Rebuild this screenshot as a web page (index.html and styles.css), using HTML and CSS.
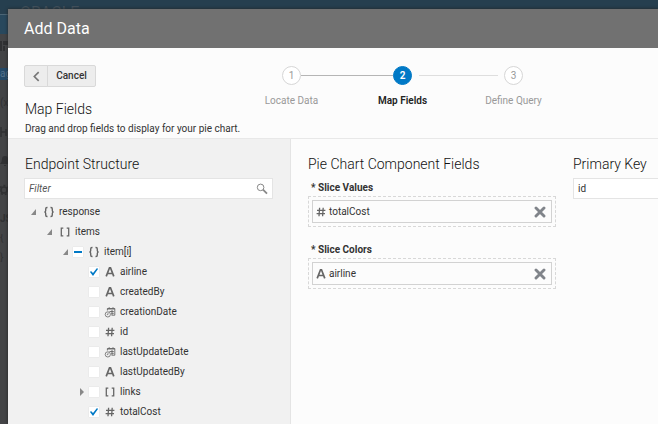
FILE: index.html
```html
<!DOCTYPE html>
<html lang="en">
<head>
<meta charset="utf-8">
<title>Add Data</title>
<link rel="stylesheet" href="styles.css">
</head>
<body>
<svg class="sprite" aria-hidden="true">
  <symbol id="object" viewBox="0 0 12 12"><path d="M4.5 1.5H4Q2.7 1.5 2.7 3V4.5Q2.7 6 1.4 6Q2.7 6 2.7 7.5V9Q2.7 10.5 4 10.5H4.5M7.5 1.5H8Q9.3 1.5 9.3 3V4.5Q9.3 6 10.6 6Q9.3 6 9.3 7.5V9Q9.3 10.5 8 10.5H7.5" fill="none" stroke="currentColor" stroke-width="1.4"/></symbol>
  <symbol id="array" viewBox="0 0 12 12"><path d="M4.3 2.2H2.3V9.8H4.3M7.7 2.2H9.7V9.8H7.7" fill="none" stroke="currentColor" stroke-width="1.3"/></symbol>
  <symbol id="string" viewBox="0 0 12 12"><path d="M2.2 10.4L5.5 1.8H6.5L9.8 10.4M3.5 7.5H8.5" fill="none" stroke="currentColor" stroke-width="1.7"/></symbol>
  <symbol id="number" viewBox="0 0 12 12"><path d="M4.6 1.8L4 10.2M8.2 1.8L7.6 10.2M2 4.3H10.4M1.6 7.6H10" fill="none" stroke="currentColor" stroke-width="1.3"/></symbol>
  <symbol id="date" viewBox="0 0 12 12"><path d="M3.4 4.5V2.5H10.8V9.2H7.5M3.4 3H10.8M5.2 1.2V3M9 1.2V3M5.5 5.5H9.8M7.2 7.3H9.8M8 4V9" fill="none" stroke="currentColor" stroke-width=".9"/><circle cx="3.8" cy="8.4" r="2.6" fill="#f1f1f1" stroke="currentColor" stroke-width=".8"/><path d="M4 6.8V8.6H2.8" fill="none" stroke="currentColor" stroke-width=".7"/></symbol>
  <symbol id="remove" viewBox="0 0 12 12"><path d="M2 2L10 10M10 2L2 10" fill="none" stroke="currentColor" stroke-width="2.9" stroke-linecap="round"/></symbol>
</svg>

<div class="backdrop" aria-hidden="true">
  <div class="brandbar"><span>ORACLE</span></div>
  <div class="toolbar"></div>
  <div class="rail">
    <span class="rail-item rail-first"><svg viewBox="0 0 12 12"><path d="M0 1H2V11H0ZM3 1H8V5H3ZM3 6H5V11H3Z" fill="currentColor"/></svg></span>
    <span class="rail-item rail-active">ag</span>
    <span class="rail-item">(x)</span>
    <span class="rail-item"><svg viewBox="0 0 12 12"><path d="M1 1V11M1 6H6M6 3V10" fill="none" stroke="currentColor" stroke-width="1.5"/></svg></span>
    <span class="rail-item"><svg viewBox="0 0 12 12"><path d="M0 9Q2 7 2 4Q2 1 5 1T8 4Q8 7 10 9ZM4 10H6V11H4Z" fill="currentColor"/></svg></span>
    <span class="rail-item"><svg viewBox="0 0 12 12"><circle cx="4" cy="6" r="3" fill="none" stroke="currentColor" stroke-width="1.5"/><circle cx="4" cy="6" r="4.5" fill="none" stroke="currentColor" stroke-width="1.5" stroke-dasharray="2 2"/></svg></span>
    <span class="rail-item"><b>JS</b></span>
    <span class="rail-item">{ }</span>
  </div>
</div>

<main class="dialog">
  <header class="dialog-title"><h1>Add Data</h1></header>

  <section class="intro">
    <div class="intro-row">
      <div class="actions">
        <button class="back" aria-label="Back"><svg viewBox="0 0 10 10"><path d="M7 1L3 5L7 9" fill="none" stroke="currentColor" stroke-width="1.5"/></svg></button>
        <button class="cancel">Cancel</button>
      </div>
      <ol class="steps">
        <li class="step"><span class="bubble">1</span><span>Locate Data</span></li>
        <li class="step current" aria-current="step"><span class="bubble">2</span><span>Map Fields</span></li>
        <li class="step"><span class="bubble">3</span><span>Define Query</span></li>
      </ol>
    </div>
    <h2>Map Fields</h2>
    <p>Drag and drop fields to display for your pie chart.</p>
  </section>

  <div class="panels">
    <section class="structure">
      <h2>Endpoint Structure</h2>
      <div class="search">
        <input type="text" placeholder="Filter" aria-label="Filter">
        <svg viewBox="0 0 12 12"><circle cx="4.6" cy="4.4" r="3.3" fill="none" stroke="currentColor"/><path d="M7 6.7L11 10.7" stroke="currentColor" stroke-width="1.8"/></svg>
      </div>
      <ul class="tree">
        <li><div class="node"><i class="open"></i><svg class="type"><use href="#object"/></svg><span>response</span></div>
          <ul>
            <li><div class="node"><i class="open"></i><svg class="type"><use href="#array"/></svg><span>items</span></div>
              <ul>
                <li><div class="node"><i class="open"></i><label><input type="checkbox" class="partial"><svg class="type"><use href="#object"/></svg>item[i]</label></div>
                  <ul>
                    <li class="node"><i></i><label><input type="checkbox" checked><svg class="type"><use href="#string"/></svg>airline</label></li>
                    <li class="node"><i></i><label><input type="checkbox"><svg class="type"><use href="#string"/></svg>createdBy</label></li>
                    <li class="node"><i></i><label><input type="checkbox"><svg class="type"><use href="#date"/></svg>creationDate</label></li>
                    <li class="node"><i></i><label><input type="checkbox"><svg class="type"><use href="#number"/></svg>id</label></li>
                    <li class="node"><i></i><label><input type="checkbox"><svg class="type"><use href="#date"/></svg>lastUpdateDate</label></li>
                    <li class="node"><i></i><label><input type="checkbox"><svg class="type"><use href="#string"/></svg>lastUpdatedBy</label></li>
                    <li class="node"><i class="closed"></i><label><input type="checkbox"><svg class="type"><use href="#array"/></svg>links</label></li>
                    <li class="node"><i></i><label><input type="checkbox" checked><svg class="type"><use href="#number"/></svg>totalCost</label></li>
                  </ul>
                </li>
              </ul>
            </li>
          </ul>
        </li>
      </ul>
    </section>

    <section class="fields">
      <h2>Pie Chart Component Fields</h2>
      <div class="field">
        <h3>* Slice Values</h3>
        <div class="dropzone"><div class="chip"><svg class="type"><use href="#number"/></svg><span>totalCost</span><button aria-label="Remove totalCost"><svg><use href="#remove"/></svg></button></div></div>
      </div>
      <div class="field">
        <h3>* Slice Colors</h3>
        <div class="dropzone"><div class="chip"><svg class="type"><use href="#string"/></svg><span>airline</span><button aria-label="Remove airline"><svg><use href="#remove"/></svg></button></div></div>
      </div>
    </section>

    <section class="key">
      <h2><label for="key">Primary Key</label></h2>
      <input id="key" type="text" value="id">
    </section>
  </div>
</main>
</body>
</html>
```
FILE: styles.css
```css
* { box-sizing: border-box; }
html, body { height: 100%; }
body {
  position: relative;
  margin: 0;
  padding: 9px 0 0 8px;
  overflow: hidden;
  font: 10px/20px Roboto, "Liberation Sans", sans-serif;
  color: #333;
  background: #434446;
}
h1, h2, h3, p, ul, ol { margin: 0; padding: 0; font-weight: 400; }
ul, ol { list-style: none; }
button, input { font: inherit; color: inherit; margin: 0; }
.sprite { position: absolute; width: 0; height: 0; }

.backdrop { position: absolute; inset: 0; color: #303133; }
.brandbar { height: 14px; padding-left: 20px; overflow: hidden; background: #263f4f; color: #43525d; font-size: 16px; line-height: 26px; }
.toolbar { height: 20px; border-top: 1px solid #4b6575; background: #28485d; }
.rail-item { display: flex; align-items: center; width: 8px; height: 28px; margin-bottom: 1px; overflow: hidden; }
.rail-item svg { flex: none; width: 12px; height: 12px; }
.rail-first { height: 24px; }
.rail-active { height: 12px; margin: 10px 0 9px; background: #254a68; color: #53718a; line-height: 12px; }

.dialog { position: relative; display: flex; flex-direction: column; height: 100%; background: #fcfcfc; box-shadow: 0 0 3px #222; }
.dialog-title { padding: 6px 16px 5px; background: #717171; color: #fff; }
h1 { font-size: 16px; line-height: 28px; }
h2 { font-size: 14px; line-height: 20px; font-weight: 300; color: #111; }

.intro { padding: 17px 16px 0; height: 91px; border-bottom: 1px solid #e8e8e8; }
.intro-row { display: flex; height: 34px; }
.intro > h2, .intro > p { padding-left: 1px; }
.actions { display: flex; height: 22px; }
.actions button { padding: 0; border: 1px solid #d9d9d9; background: #ededed; }
.actions .back { display: grid; place-items: center; width: 24px; color: #777; border-radius: 2px 0 0 2px; }
.back svg { width: 11px; height: 11px; }
.actions .cancel { width: 49px; margin-left: -1px; font-weight: 500; border-radius: 0 2px 2px 0; }
.steps { display: flex; margin-left: 140px; color: #999; }
.step { position: relative; display: flex; flex-direction: column; align-items: center; gap: 6px; width: 111px; text-align: center; }
.bubble { width: 19px; height: 19px; margin-top: 1px; border: 1px solid #d6d6d6; border-radius: 50%; line-height: 17px; background: #fff; }
.current { color: #222; font-weight: 600; }
.current .bubble { border-color: #0079c6; background: #0079c6; color: #fff; }
.step + .step::before { content: ""; position: absolute; top: 10px; right: 65px; width: 92px; height: 1px; background: #b5b5b5; }
.step + .current + .step::before { right: 71px; width: 79px; background: #dedede; }

.panels { display: flex; flex: 1; min-height: 0; }
.panels > section { padding-top: 15px; }
.structure { flex: none; width: 283px; padding: 0 17px 0 16px; background: #f1f1f1; border-right: 1px solid #e4e4e4; }
.structure h2 { padding-left: 1px; }
.search { display: flex; align-items: center; height: 21px; margin-top: 4px; padding: 0 4px; border: 1px solid #e4e4e4; background: #fff; color: #888; }
.search input { flex: 1; min-width: 0; padding: 0; border: 0; background: none; }
.search input::placeholder { color: #555; font-style: italic; opacity: 1; }
.search svg { width: 12px; height: 12px; }
.tree { padding: 3px 0 0 6px; }
.tree ul { padding-left: 16px; }
.node, .node label { display: flex; align-items: center; }
.node { height: 20px; }
.node i { flex: none; width: 13px; height: 6px; background: #888; clip-path: polygon(1px 6px, 6px 0, 6px 6px); }
.node i:not([class]) { background: none; }
.node i.closed { height: 8px; clip-path: polygon(2px 0, 6px 4px, 2px 8px); }
.type { flex: none; width: 12px; height: 12px; margin-right: 4px; color: #666; }
.node input { appearance: none; display: grid; flex: none; width: 10px; height: 10px; margin: 0 5px 0 -2px; background: #fff; box-shadow: 0 0 1px #ccc; }
.node input:checked::before, .node .partial::before { content: ""; background: #0079c6; }
.node input:checked::before { clip-path: polygon(1px 5px, 2px 4px, 4px 6px, 8px 1px, 9px 2px, 4px 9px); }
.node .partial::before { height: 2px; margin: 4px 1px; }

.fields { flex: none; width: 282px; padding: 0 17px; }
h3 { padding: 0 3px 1px; font-size: 10px; line-height: 14px; font-weight: 700; }
.fields h2 { margin-bottom: 7px; }
.field { margin-bottom: 16px; }
.dropzone { padding: 3px; border: 1px dashed #d8d8d8; }
.chip { display: flex; align-items: center; height: 23px; padding: 0 5px 0 2px; border: 1px solid #d2d2d2; }
.chip span { flex: 1; }
.chip button { display: grid; padding: 0; border: 0; background: none; color: #80848a; }
.chip button svg { width: 12px; height: 12px; }
.chip .type { margin-right: 2px; }

.key { flex: 1; min-width: 0; }
.key input { width: 100%; height: 21px; margin-top: 4px; padding: 0 4px; border: 1px solid #e4e4e4; border-right: 0; background: #fff; }
```
